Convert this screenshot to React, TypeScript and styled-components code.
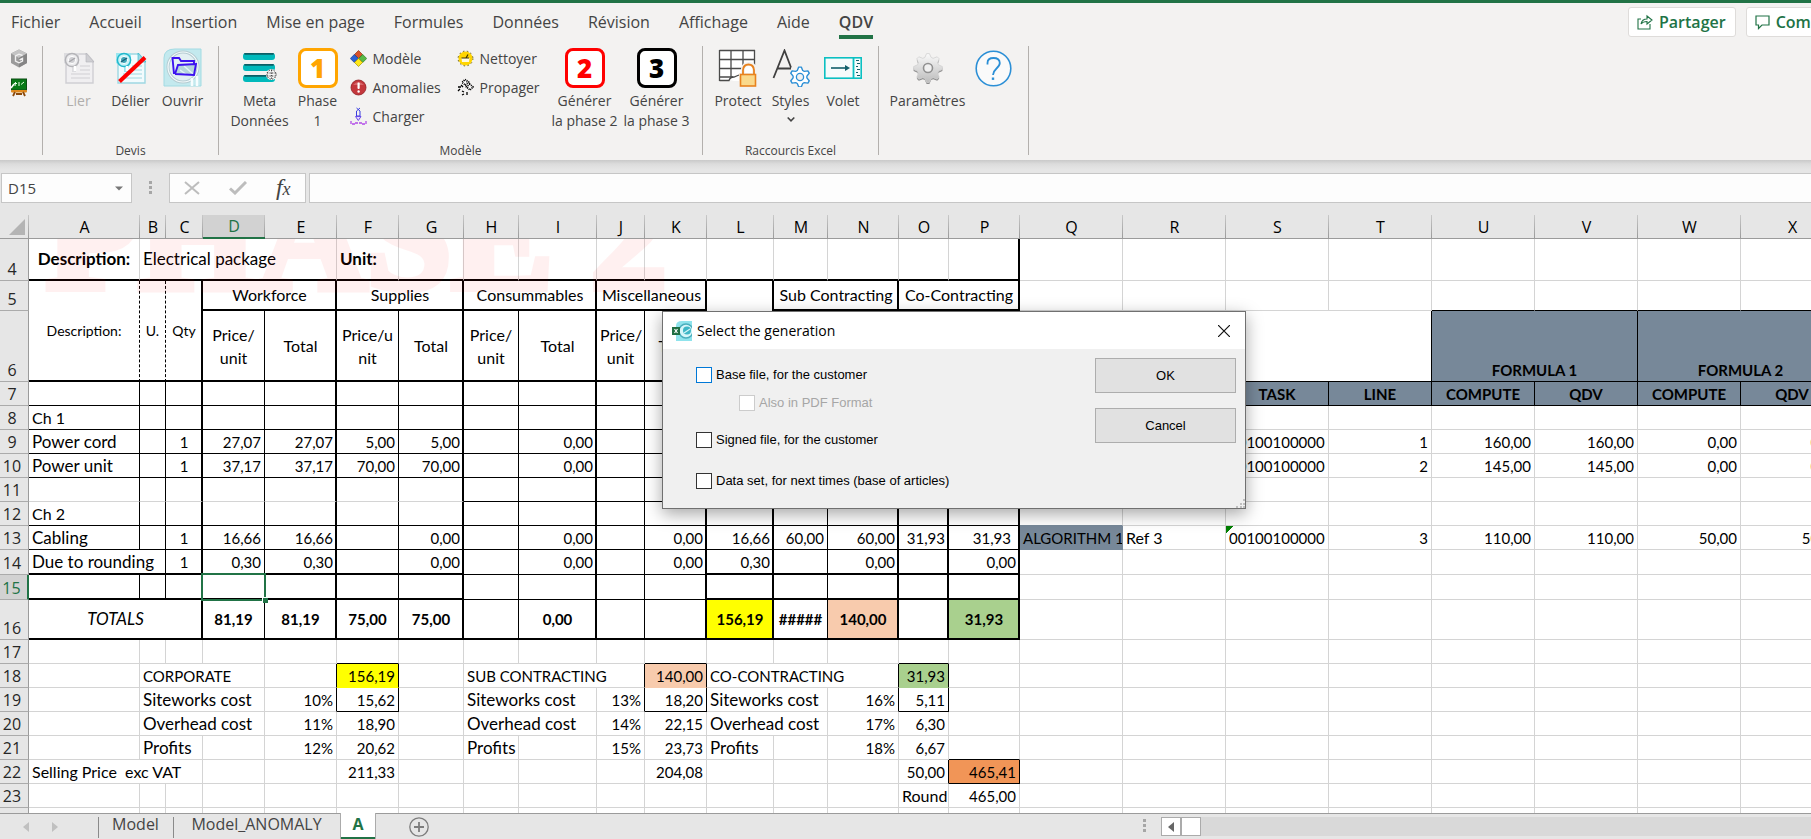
import React from "react";
import styled, { createGlobalStyle, css } from "styled-components";

const ui = `"Open Sans", "Noto Sans", sans-serif`;
const sheetFont = `Lato, "Open Sans", sans-serif`;
const green = "#217346";

const Global = createGlobalStyle`
  *, *::before, *::after { box-sizing: border-box; }
  body { margin: 0; background: #e6e6e6; font-family: ${ui}; color: #444; }
  button, input { font-family: inherit; font-size: inherit; color: inherit; margin: 0; }
  button { background: none; border: 0; padding: 0; cursor: pointer; }
  svg { display: block; flex: none; }
`;

/* ---------- Shell ---------- */

const Shell = styled.div`
  display: flex;
  flex-direction: column;
  height: 100vh;
  overflow: hidden;
  border-top: 3px solid ${green};
  position: relative;
`;

const RibbonArea = styled.header`
  background: #f3f2f1;
  flex: none;
`;

const TabRow = styled.div`
  display: flex;
  height: 40px;
`;

const Tabs = styled.nav`
  display: flex;
  flex: 1;
  align-items: flex-start;
  gap: 29px;
  padding-left: 11px;
`;

const TabButton = styled.button<{ $active?: boolean }>`
  height: 36px;
  padding-top: 6px;
  font-size: 16px;
  line-height: 26px;
  white-space: nowrap;
  border-bottom: 4px solid ${(p) => (p.$active ? green : "transparent")};
  font-weight: ${(p) => (p.$active ? 600 : 400)};
`;

const ShareGroup = styled.div`
  flex: 0 0 183px;
  display: flex;
  gap: 10px;
  padding-top: 4px;
  overflow: hidden;
`;

const ShareButton = styled.button`
  flex: none;
  display: flex;
  align-items: center;
  gap: 6px;
  height: 30px;
  padding: 0 9px 0 8px;
  background: #fff;
  border: 1px solid #dedcda;
  border-radius: 3px;
  color: ${green};
  font-size: 16px;
  font-weight: 600;
`;

const RibbonBody = styled.div`
  display: flex;
  height: 117px;
  padding-top: 3px;
`;

const Group = styled.section<{ $w: number }>`
  flex: none;
  width: ${(p) => p.$w}px;
  display: flex;
  flex-direction: column;
  justify-content: space-between;
`;

const GroupRow = styled.div`
  display: flex;
  justify-content: center;
`;

const GroupLabel = styled.div`
  text-align: center;
  font-size: 12px;
  line-height: 18px;
`;

const Separator = styled.div`
  flex: none;
  width: 1px;
  height: 109px;
  background: #b3b0ad;
`;

const BigButton = styled.button<{ $w: number; $off?: boolean }>`
  width: ${(p) => p.$w}px;
  display: flex;
  flex-direction: column;
  align-items: center;
  padding-top: 2px;
  font-size: 14px;
  line-height: 20px;
  white-space: nowrap;
  color: ${(p) => (p.$off ? "#b0aeac" : "#444")};
`;

const IconSlot = styled.span`
  display: flex;
  align-items: center;
  justify-content: center;
  height: 40px;
  margin-bottom: 3px;
`;

const PhaseBadge = styled.span<{ $c: string }>`
  width: 40px;
  height: 40px;
  border: 3px solid ${(p) => p.$c};
  border-radius: 8px;
  background: #fff;
  color: ${(p) => p.$c};
  font-weight: 800;
  font-size: 26px;
  line-height: 34px;
  text-align: center;
`;

const SmallColumn = styled.div<{ $w: number }>`
  width: ${(p) => p.$w}px;
  display: flex;
  flex-direction: column;
  gap: 5px;
  padding-left: 5px;
`;

const SmallButton = styled.button`
  display: flex;
  align-items: center;
  gap: 6px;
  height: 24px;
  font-size: 14px;
  white-space: nowrap;
`;

const MiniColumn = styled.div`
  width: 42px;
  flex: none;
  display: flex;
  flex-direction: column;
  align-items: flex-start;
  gap: 10px;
  padding: 3px 0 0 10px;
`;

/* ---------- Formula bar ---------- */

const FormulaBar = styled.div`
  flex: none;
  display: flex;
  padding: 13px 0 12px 1px;
  background: linear-gradient(#c9c9c9, #dcdcdc 4px, #e6e6e6 10px);
`;

const Box = styled.div<{ $w: number }>`
  flex: none;
  width: ${(p) => p.$w}px;
  height: 30px;
  display: flex;
  align-items: center;
  justify-content: space-around;
  background: #fdfdfd;
  border: 1px solid #c6c6c6;
`;

const NameInput = styled.input`
  flex: 1;
  min-width: 0;
  border: 0;
  background: none;
  outline: 0;
  padding: 0 6px;
  font-size: 15px;
`;

const CaretButton = styled.button`
  width: 24px;
  display: flex;
  justify-content: center;
`;

const Dots = styled.div<{ $w: number }>`
  flex: none;
  width: ${(p) => p.$w}px;
  display: flex;
  align-items: center;
  justify-content: center;
`;

const FormulaInput = styled.input`
  flex: 1;
  min-width: 0;
  height: 30px;
  margin-left: 3px;
  background: #fdfdfd;
  border: 1px solid #c6c6c6;
  border-right: 0;
  outline: 0;
  padding: 0 6px;
`;

const IconButton = styled.button`
  display: flex;
  align-items: center;
  justify-content: center;
`;

/* ---------- Sheet ---------- */

const SheetArea = styled.main`
  flex: 1;
  min-height: 0;
  overflow: hidden;
  position: relative;
  background: #fff;
`;

const Grid = styled.table`
  border-collapse: separate;
  border-spacing: 0;
  table-layout: fixed;
  font-family: ${sheetFont};
  font-size: 15px;
  line-height: 20px;
  color: #000;
`;

const ColHead = styled.th<{ $sel?: boolean }>`
  height: 24px;
  padding: 0;
  font-family: ${ui};
  font-size: 16px;
  font-weight: 400;
  background: linear-gradient(#c8c8c8, #9b9b9b) right / 1px 100% no-repeat ${(p) => (p.$sel ? "#d2d2d2" : "#e6e6e6")};
  border-bottom: ${(p) => (p.$sel ? `2px solid ${green}` : "1px solid #9b9b9b")};
  color: ${(p) => (p.$sel ? green : "#000")};
  svg { margin-left: 9px; }
`;

const RowHead = styled.th<{ $sel?: boolean }>`
  padding: 0 4px 1px 0;
  vertical-align: bottom;
  font-family: ${ui};
  font-size: 16px;
  font-weight: 400;
  background: ${(p) => (p.$sel ? "#d2d2d2" : "#e6e6e6")};
  border-bottom: 1px solid #ababab;
  border-right: ${(p) => (p.$sel ? `2px solid ${green}` : "1px solid #9b9b9b")};
  color: ${(p) => (p.$sel ? green : "#262626")};
`;

type Line = "grid" | "thin" | "thick" | "dash" | "slate" | "yellow" | "peach" | "leaf";

const slate = "#778899";
const fills = { slate, yellow: "#ffff00", peach: "#f8cbad", leaf: "#a9d08e", orange: "#f19557" };

const lines: Record<Line, string> = {
  grid: "1px solid #d4d4d4",
  thin: "1px solid #000",
  thick: "2px solid #000",
  dash: "1px dashed #000",
  slate: `1px solid ${slate}`,
  yellow: `1px solid ${fills.yellow}`,
  peach: `1px solid ${fills.peach}`,
  leaf: `1px solid ${fills.leaf}`,
};

type Align = "left" | "right" | "center";
type Size = "label" | "number" | "word" | "title";

const sizes: Record<Size, number> = { label: 14, number: 15, word: 16, title: 17 };

const Td = styled.td<{
  $r: Line;
  $b: Line;
  $align: Align;
  $size: Size;
  $fill?: string;
  $bold?: boolean;
  $italic?: boolean;
  $low?: boolean;
  $indent?: boolean;
  $sel?: boolean;
  $flag?: boolean;
}>`
  padding: 0 ${(p) => (p.$indent ? 7 : p.$r === "thick" || p.$align === "left" ? 2 : 3)}px ${(p) => (p.$low ? 1 : 0)}px 3px;
  border-right: ${(p) => lines[p.$r]};
  border-bottom: ${(p) => lines[p.$b]};
  text-align: ${(p) => p.$align};
  background: ${(p) => p.$fill ?? "#fff"};
  white-space: pre;
  overflow: ${(p) => (p.$sel ? "visible" : "hidden")};
  vertical-align: ${(p) => (p.$low ? "bottom" : "middle")};
  font-size: ${(p) => sizes[p.$size]}px;
  font-weight: ${(p) => (p.$bold ? 700 : 400)};
  font-style: ${(p) => (p.$italic ? "italic" : "normal")};
  ${(p) =>
    p.$flag &&
    css`
      background: linear-gradient(135deg, #008000 5px, #fff 5px);
    `}
  ${(p) =>
    p.$sel &&
    css`
      position: relative;
      &::before {
        content: "";
        position: absolute;
        z-index: 1;
        inset: -2px -2px -3px -2px;
        border: 2px solid ${green};
      }
      &::after {
        content: "";
        position: absolute;
        z-index: 2;
        right: -4px;
        bottom: -5px;
        width: 6px;
        height: 6px;
        background: ${green};
        border: solid #fff;
        border-width: 1px 0 0 1px;
      }
    `}
`;

const TwoLine = styled.div`
  line-height: 23px;
`;

const Watermark = styled.div`
  position: absolute;
  top: 24px;
  left: 0;
  height: 56px;
  padding-left: 46px;
  overflow: hidden;
  display: flex;
  align-items: flex-end;
  font-family: "Liberation Serif", serif;
  font-weight: 700;
  font-size: 152px;
  line-height: 116px;
  white-space: pre;
  color: #f00;
  -webkit-text-stroke: 8px #f00;
  opacity: 0.055;
  pointer-events: none;
`;

const cols: [string, number][] = [
  ["A", 111], ["B", 26], ["C", 37], ["D", 62], ["E", 72], ["F", 62], ["G", 65], ["H", 55],
  ["I", 78], ["J", 48], ["K", 62], ["L", 67], ["M", 54], ["N", 71], ["O", 50], ["P", 71],
  ["Q", 103], ["R", 103], ["S", 103], ["T", 103], ["U", 103], ["V", 103], ["W", 103], ["X", 103],
];
const HEAD_W = 29;
const tableWidth = cols.reduce((s, c) => s + c[1], HEAD_W);

const rowHeights: Record<number, number> = { 4: 42, 5: 30, 6: 71, 14: 25, 15: 25, 16: 40 };
const rows = Array.from({ length: 21 }, (_, i) => i + 4);

interface CellData {
  t?: React.ReactNode;
  cs?: number;
  rs?: number;
  al?: Align;
  size?: Size;
  fill?: string;
  bold?: boolean;
  italic?: boolean;
  low?: boolean;
  indent?: boolean;
  flag?: boolean;
}

const L = (t: string, cs = 1, size: Size = "title"): CellData => ({ t, cs, size });
const R = (t: string, extra: CellData = {}): CellData => ({ t, al: "right", ...extra });
const C = (t: React.ReactNode, extra: CellData = {}): CellData => ({ t, al: "center", ...extra });
const W = (t: React.ReactNode, cs = 1): CellData => ({ t, cs, al: "center", size: "word" });
const H = (t: string, cs = 1): CellData => ({ t, cs, al: "center", bold: true, fill: slate, low: true });
const B = (t: string, extra: CellData = {}): CellData => ({ t, al: "center", bold: true, ...extra });
const price = W(<TwoLine>{"Price/\nunit"}</TwoLine>);

const cells: Record<string, CellData> = {
  A4: B("Description:", { size: "title" }), B4: L("Electrical package", 4), F4: { t: "Unit:", bold: true, size: "title" },
  A5: C("Description:", { rs: 2, size: "label" }), B5: C("U.", { rs: 2, size: "label" }), C5: C("Qty", { rs: 2, size: "label" }),
  D5: W("Workforce", 2), F5: W("Supplies", 2), H5: W("Consummables", 2),
  J5: W("Miscellaneous", 2), L5: { rs: 2 }, M5: W("Sub Contracting", 2), O5: W("Co-Contracting", 2),
  D6: price, E6: W("Total"), F6: W(<TwoLine>{"Price/u\nnit"}</TwoLine>), G6: W("Total"),
  H6: price, I6: W("Total"), J6: price, K6: W("Total"),
  Q6: { cs: 4 }, U6: H("FORMULA 1", 2), W6: H("FORMULA 2", 2),
  Q7: H(""), R7: H(""), S7: H("TASK"), T7: H("LINE"), U7: H("COMPUTE"), V7: H("QDV"), W7: H("COMPUTE"), X7: H("QDV"),
  A8: L("Ch 1", 1, "word"),
  A9: L("Power cord"), C9: C("1"), D9: R("27,07"), E9: R("27,07"), F9: R("5,00"), G9: R("5,00"), I9: R("0,00"),
  S9: L("00100100000", 1, "number"), T9: R("1"), U9: R("160,00"), V9: R("160,00"), W9: R("0,00"), X9: R("0,00"),
  A10: L("Power unit"), C10: C("1"), D10: R("37,17"), E10: R("37,17"), F10: R("70,00"), G10: R("70,00"), I10: R("0,00"),
  S10: L("00100100000", 1, "number"), T10: R("2"), U10: R("145,00"), V10: R("145,00"), W10: R("0,00"), X10: R("0,00"),
  A12: L("Ch 2", 1, "word"),
  A13: L("Cabling"), C13: C("1"), D13: R("16,66"), E13: R("16,66"), G13: R("0,00"), I13: R("0,00"), K13: R("0,00"),
  L13: R("16,66"), M13: R("60,00"), N13: R("60,00"), O13: R("31,93"), P13: R("31,93", { indent: true }),
  Q13: { t: "ALGORITHM 1", fill: slate }, R13: L("Ref 3", 1, "word"), S13: { t: "00100100000", flag: true },
  T13: R("3"), U13: R("110,00"), V13: R("110,00"), W13: R("50,00"), X13: R("50,00"),
  A14: L("Due to rounding", 2), C14: C("1"), D14: R("0,30"), E14: R("0,30"), G14: R("0,00"), I14: R("0,00"),
  K14: R("0,00"), L14: R("0,30"), N14: R("0,00"), P14: R("0,00"),
  A16: C("TOTALS", { cs: 3, italic: true, size: "title" }), D16: B("81,19"), E16: B("81,19"), F16: B("75,00"), G16: B("75,00"),
  I16: B("0,00"), L16: B("156,19", { fill: fills.yellow }), M16: B("#####"),
  N16: B("140,00", { fill: fills.peach }), P16: B("31,93", { fill: fills.leaf }),
  B18: L("CORPORATE", 3, "number"), F18: R("156,19", { fill: fills.yellow }),
  H18: L("SUB CONTRACTING", 3, "number"), K18: R("140,00", { fill: fills.peach }),
  L18: L("CO-CONTRACTING", 3, "number"), O18: R("31,93", { fill: fills.leaf }),
  B19: L("Siteworks cost", 3), E19: R("10%"), F19: R("15,62"), H19: L("Siteworks cost", 2), J19: R("13%"), K19: R("18,20"),
  L19: L("Siteworks cost", 2), N19: R("16%"), O19: R("5,11"),
  B20: L("Overhead cost", 3), E20: R("11%"), F20: R("18,90"), H20: L("Overhead cost", 2), J20: R("14%"), K20: R("22,15"),
  L20: L("Overhead cost", 2), N20: R("17%"), O20: R("6,30"),
  B21: L("Profits", 2), E21: R("12%"), F21: R("20,62"), H21: L("Profits"), J21: R("15%"), K21: R("23,73"),
  L21: L("Profits"), N21: R("18%"), O21: R("6,67"),
  A22: L("Selling Price  exc VAT", 3, "word"), F22: R("211,33"), K22: R("204,08"), O22: R("50,00"),
  P22: R("465,41", { fill: fills.orange }),
  O23: L("Round", 1, "word"), P23: R("465,00"),
};

function rightLine(col: string, row: number): Line {
  if (col === "P" && row <= 16) return "thick";
  if (row >= 5 && row <= 16 && col < "P") {
    if ("CEGIKLN".includes(col)) return row === 15 && col === "C" ? "thin" : "thick";
    if (col === "O") return row >= 12 ? "thick" : "thin";
    if (row <= 6 && (col === "A" || col === "B")) return "dash";
    return "thin";
  }
  if (row === 6 || row === 7) return "thin";
  if (row === 13 && col === "Q") return "slate";
  if ((row === 18 || row === 19) && "EFJKNO".includes(col)) return "thin";
  if (row === 22 && (col === "O" || col === "P")) return "thin";
  return "grid";
}

function bottomLine(col: string, row: number): Line {
  if (col <= "P") {
    if (row === 4 || row === 6 || row === 16) return "thick";
    if (row === 5) return "thick";
    if (row === 11) return col < "H" ? "grid" : "thin";
    if (row >= 7 && row <= 13) return "thin";
    if (row === 14 || row === 15) return col >= "H" && col <= "K" ? "thin" : "thick";
    if ((row === 17 || row === 19) && "FKO".includes(col)) return "thin";
    if (row === 18 && col === "F") return "yellow";
    if (row === 18 && col === "K") return "peach";
    if (row === 18 && col === "O") return "leaf";
    if ((row === 21 || row === 22) && col === "P") return "thin";
    return "grid";
  }
  if (row === 5 && col >= "U") return "thin";
  if (row === 6 || row === 7) return "thin";
  if ((row === 12 || row === 13) && col === "Q") return "slate";
  return "grid";
}

function Sheet() {
  const covered = new Set<string>();
  return (
    <Grid style={{ width: tableWidth }}>
      <colgroup>
        <col width={HEAD_W} />
        {cols.map(([c, w]) => (
          <col key={c} width={w} />
        ))}
      </colgroup>
      <thead>
        <tr>
          <ColHead aria-label="Tout">
            <svg width="16" height="16" viewBox="0 0 16 16"><path d="M16 0V16H0Z" fill="#b4b4b4" /></svg>
          </ColHead>
          {cols.map(([c]) => (
            <ColHead key={c} scope="col" $sel={c === "D"}>{c}</ColHead>
          ))}
        </tr>
      </thead>
      <tbody>
        {rows.map((row) => (
          <tr key={row} style={{ height: rowHeights[row] ?? 24 }}>
            <RowHead scope="row" $sel={row === 15}>{row < 24 ? row : null}</RowHead>
            {cols.map(([col], i) => {
              const key = `${col}${row}`;
              if (covered.has(key)) return null;
              const d = cells[key] ?? {};
              const cs = d.cs ?? 1;
              const rs = d.rs ?? 1;
              for (let x = 0; x < cs; x++)
                for (let y = 0; y < rs; y++) covered.add(`${cols[i + x][0]}${row + y}`);
              return (
                <Td
                  key={key}
                  colSpan={cs}
                  rowSpan={rs}
                  $r={rightLine(cols[i + cs - 1][0], row)}
                  $b={bottomLine(col, row + rs - 1)}
                  $align={d.al ?? "left"}
                  $size={d.size ?? "number"}
                  $fill={d.fill}
                  $bold={d.bold}
                  $italic={d.italic}
                  $low={d.low}
                  $indent={d.indent}
                  $flag={d.flag}
                  $sel={key === "D15"}
                >
                  {d.t}
                </Td>
              );
            })}
          </tr>
        ))}
      </tbody>
    </Grid>
  );
}

/* ---------- Bottom bar ---------- */

const BottomBar = styled.footer`
  flex: none;
  display: flex;
  height: 26px;
  background: #e6e6e6;
  box-shadow: inset 0 1px #9b9b9b;
`;

const NavArrows = styled.div`
  flex: none;
  width: 98px;
  display: flex;
  align-items: center;
  gap: 23px;
  padding: 2px 0 0 23px;
`;

const SheetTab = styled.button<{ $w: number; $active?: boolean }>`
  flex: none;
  width: ${(p) => p.$w}px;
  padding-bottom: 4px;
  font-size: 16px;
  line-height: 20px;
  color: ${(p) => (p.$active ? green : "#444")};
  font-weight: ${(p) => (p.$active ? 700 : 400)};
  ${(p) =>
    p.$active
      ? css`
          background: #fff;
          box-shadow: inset 1px 0 #ababab, inset -1px 0 #ababab, inset 0 -2px ${green};
        `
      : css`
          background: linear-gradient(#8a8a8a, #8a8a8a) left 4px / 1px 21px no-repeat;
        `}
`;

const AddButton = styled.button`
  width: 86px;
  display: flex;
  justify-content: center;
  padding-top: 4px;
`;

const Spacer = styled.div`
  flex: 1;
`;

const ScrollTrack = styled.div`
  flex: 0 0 650px;
  height: 19px;
  margin-top: 4px;
  display: flex;
  background: #d9d9d9;
`;

const ScrollPart = styled.button<{ $w: number }>`
  width: ${(p) => p.$w}px;
  display: flex;
  align-items: center;
  justify-content: center;
  background: #fff;
  border: 1px solid #ababab;
`;

/* ---------- Dialog ---------- */

const Dialog = styled.div`
  position: absolute;
  left: 662px;
  top: 308px;
  z-index: 5;
  width: 584px;
  border: 1px solid #707070;
  background: #f0f0f0;
  box-shadow: 0 5px 16px rgba(0, 0, 0, 0.35);
  color: #000;
`;

const DialogTitle = styled.div`
  display: flex;
  align-items: center;
  gap: 5px;
  height: 37px;
  padding: 0 15px 0 9px;
  background: #fff;
  font-size: 14px;
`;

const DialogHeading = styled.h2`
  flex: 1;
  margin: 0;
  font-size: 14px;
  font-weight: 400;
`;

const DialogBody = styled.div`
  display: flex;
  justify-content: space-between;
  padding: 9px 9px 19px 33px;
  font-family: "Liberation Sans", Arial, sans-serif;
  font-size: 13px;
  position: relative;
`;

const Options = styled.div`
  display: flex;
  flex-direction: column;
  padding-top: 9px;
`;

const Option = styled.label<{ $gap?: number; $nested?: boolean; $off?: boolean }>`
  display: flex;
  align-items: flex-start;
  gap: 4px;
  height: 16px;
  line-height: 15px;
  margin-top: ${(p) => p.$gap ?? 0}px;
  margin-left: ${(p) => (p.$nested ? 43 : 0)}px;
  color: ${(p) => (p.$off ? "#a6a6a6" : "#000")};
`;

const Check = styled.input<{ $c: string }>`
  appearance: none;
  width: 16px;
  height: 16px;
  border: 1px solid ${(p) => p.$c};
  background: #fff;
`;

const DialogButtons = styled.div`
  display: flex;
  flex-direction: column;
  gap: 15px;
`;

const DialogButton = styled.button`
  width: 141px;
  height: 35px;
  background: #e1e1e1;
  border: 1px solid #adadad;
`;

const Grip = styled.span`
  position: absolute;
  right: 0;
  bottom: 0;
`;

/* ---------- Icons ---------- */

const DocIcon = ({ cyan }: { cyan?: boolean }) => {
  const a = cyan ? "#22b8cc" : "#b4b4b8";
  const l = cyan ? "#9fd8e2" : "#cfcfd3";
  return (
    <svg width="32" height="34" viewBox="0 0 32 34">
      <path d="M3 3H24L30 10V32H3Z" fill={cyan ? "#f2fbfd" : "#f0eff1"} stroke={l} strokeWidth="1.4" />
      <path d="M23 2L31 11H23Z" fill={l} stroke={a} strokeWidth="0.6" />
      <path d="M17 15H27M17 19H27M8 23H27M8 27H27" stroke={l} strokeWidth="1.2" />
      <path d="M1 2H16V12L13 17V21H9V16L1 12Z" fill={cyan ? "#9be6ef" : "#dcdcdf"} />
      <circle cx="9" cy="9" r="6.600" fill={cyan ? "#c8f4f8" : "#ececee"} stroke={a} strokeWidth="1.500" />
      <circle cx="9" cy="9" r="3.600" fill={cyan ? "#3fa7b8" : "#cfcfd3"} stroke="#fff" strokeWidth="1" />
      <path d="M6 11L12 7" stroke={cyan ? "#1c5f78" : "#a6a6aa"} strokeWidth="1.400" />
      <path d="M12 15V20" stroke="#fff" strokeWidth="2.500" />
      {cyan && <path d="M4.500 30.500L30 6.500" stroke="#f00" strokeWidth="4" />}
    </svg>
  );
};

const OpenIcon = () => (
  <svg width="40" height="40" viewBox="0 0 40 40">
    <path d="M1 38V10Q1 1 12 1H38V38Z" fill="#c3e9ee" stroke="#a2dbe3" />
    <circle cx="20" cy="19" r="15" fill="#e3f0f3" stroke="#b4cbd1" strokeWidth="3" />
    <circle cx="20" cy="19" r="15" fill="none" stroke="#f3fbfc" strokeWidth="1.200" />
    <path d="M29 30V38M34 28V38" stroke="#f7fdfe" strokeWidth="2.500" />
    <path d="M12 26L15 17H33L30 27Z" fill="#b5d5dc" />
    <path d="M17 22L24 27M21 18L30 26" stroke="#e4f5f8" strokeWidth="1.500" />
    <path d="M11 26L9.500 10H16L18 13H31V16M12 26L15 17L33 16L31 27L12 26" fill="none" stroke="#3d12f0" strokeWidth="1.900" />
  </svg>
);

const MetaIcon = () => (
  <svg width="34" height="32" viewBox="0 0 34 32">
    {[1, 12, 23].map((y) => (
      <g key={y}>
        <rect x="0" y={y} width="32" height="7" rx="3" fill="#00b9bb" />
        <path d={`M2 ${y + 0.8}H30`} stroke="#0b5f66" strokeWidth="1.8" strokeLinecap="round" />
      </g>
    ))}
    <circle cx="28.500" cy="22.500" r="5.500" fill="#f4f4f4" />
    <circle cx="28.500" cy="22.500" r="4.600" fill="none" stroke="#222" strokeWidth="1" strokeDasharray="1.2 1.4" />
    <path d="M28.500 18V27M24 21H33M24 24H33" stroke="#333" strokeWidth="0.900" strokeDasharray="1.3 1.2" />
  </svg>
);

const CubeIcon = () => (
  <svg width="18" height="19" viewBox="0 0 18 19">
    <path d="M9 0.500L17 4.500V14L9 18.500L1 14V4.500Z" fill="#9b9b9b" />
    <path d="M9 0.500L17 4.500L9 9L1 4.500Z" fill="#c4c4c4" />
    <path d="M9 9L17 4.500V14L9 18.500Z" fill="#858585" />
    <path d="M12.500 6.500L9 5.200L5.500 7V12L9 13.800L12.500 12V9.500L9.500 11" fill="none" stroke="#f0f0f0" strokeWidth="1.400" />
  </svg>
);

const BoardIcon = () => (
  <svg width="18" height="19" viewBox="0 0 18 19">
    <rect x="1.500" y="1" width="15" height="11" fill="#077a16" stroke="#0b4d12" />
    <path d="M4 5.500H7M5.500 4L5 8M9 4V8M11 6.500L14 4" stroke="#e8ffe8" strokeWidth="1" />
    <path d="M1 10L4 6" stroke="#fff" strokeWidth="1.500" />
    <rect x="1" y="12" width="16" height="2.500" rx="1" fill="#e08a1e" />
    <path d="M5 14L3 18M13 14L15 18M6 16H12" stroke="#8b4a0c" strokeWidth="1.800" />
  </svg>
);

const DiamondsIcon = () => (
  <svg width="17" height="17" viewBox="0 0 17 17">
    <path d="M8.500 0.500L12.500 4.500L8.500 8.500L4.500 4.500Z" fill="#d9542b" stroke="#8f3013" strokeWidth="0.700" />
    <path d="M4.300 4.500L8.300 8.500L4.300 12.500L0.300 8.500Z" fill="#2c62d6" stroke="#1a3a86" strokeWidth="0.700" />
    <path d="M12.700 4.500L16.700 8.500L12.700 12.500L8.700 8.500Z" fill="#58b947" stroke="#2b7a1e" strokeWidth="0.700" />
    <path d="M8.500 8.500L12.500 12.500L8.500 16.500L4.500 12.500Z" fill="#ffe81a" stroke="#a89200" strokeWidth="0.700" />
  </svg>
);

const ErrorIcon = () => (
  <svg width="17" height="17" viewBox="0 0 17 17">
    <circle cx="8.500" cy="8.500" r="7.500" fill="#c4373c" stroke="#8f1d22" strokeWidth="0.800" />
    <path d="M3 6Q8.500 0 14 6" fill="#de7a7c" opacity="0.700" />
    <rect x="7.500" y="3.500" width="2.200" height="6.500" rx="1" fill="#fff" />
    <circle cx="8.600" cy="12.500" r="1.200" fill="#fff" />
  </svg>
);

const LoadIcon = () => (
  <svg width="17" height="19" viewBox="0 0 17 19">
    <path d="M6.500 1L10 4M10 1L6.500 4V9H10V4" fill="none" stroke="#3a3fe0" strokeWidth="1" />
    <path d="M5.500 9.500H11L8.300 13.500Z" fill="#e6dcff" stroke="#6b4be8" strokeWidth="1" />
    <path d="M1 14V17H5V16H12V17H16V14" fill="none" stroke="#b14be8" strokeWidth="1.300" strokeDasharray="3 1" />
  </svg>
);

const CleanIcon = () => (
  <svg width="17" height="17" viewBox="0 0 17 17">
    <circle cx="8.500" cy="8.500" r="7" fill="#ffd500" />
    <circle cx="8.500" cy="8.500" r="7.400" fill="none" stroke="#6b5a00" strokeWidth="1" strokeDasharray="1.500 2.500" />
    <path d="M4.500 8H12.500L12 12H5Z" fill="#fffbe0" />
    <path d="M4.500 8H12M9 8L11 4.500" stroke="#3d3300" strokeWidth="1.200" />
  </svg>
);

const SpreadIcon = () => (
  <svg width="17" height="18" viewBox="0 0 17 18">
    <g fill="#fff" stroke="#000" strokeWidth="1.800" strokeDasharray="1 0.900">
      <path d="M8 1.500L11.500 4L8.500 7L5 4.500Z" />
      <path d="M12.500 6L16 9L13 12L9.500 9Z" />
    </g>
    <path d="M1 9H4M3 11L1 13M5 13L7 14M7 16L5 17M10 14V17M4 7L6 9" stroke="#000" strokeWidth="1.300" />
  </svg>
);

const ProtectIcon = () => (
  <svg width="40" height="38" viewBox="0 0 40 38">
    <path d="M2 1.500H37V32H16L12 31L8 32H2Z" fill="#fff" />
    <path d="M1.500 1.500H37M1.500 10.500H37M1.500 19.500H24M1.500 28H15M1.500 1V32M13 1V28M25 1V20M36.500 1V16" fill="none" stroke="#4a4a4a" strokeWidth="1.300" />
    <path d="M1.500 31.500H11Q12 28 16 28L21 26" fill="none" stroke="#4a4a4a" strokeWidth="1.300" />
    <rect x="21" y="24" width="18" height="14" fill="#f3f2f1" />
    <path d="M25 26V20Q25.500 15 31 15T36 20V26" fill="none" stroke="#f3f2f1" strokeWidth="4" />
    <path d="M25 26V21Q25.500 15.500 30.500 15.500T36 21V26" fill="none" stroke="#e8821e" strokeWidth="1.800" />
    <rect x="22.500" y="25.500" width="15" height="11.500" fill="#fad98b" stroke="#e8821e" strokeWidth="1.600" />
  </svg>
);

const teeth = (cx: number, cy: number, r1: number, r2: number, n: number) =>
  Array.from({ length: n * 4 }, (_, i) => {
    const a = ((i - 0.5) / (n * 4)) * Math.PI * 2 - Math.PI / 2;
    const r = i % 4 < 2 ? r2 : r1;
    return `${(cx + r * Math.cos(a)).toFixed(1)},${(cy + r * Math.sin(a)).toFixed(1)}`;
  }).join(" ");

const StylesIcon = () => (
  <svg width="38" height="38" viewBox="0 0 38 38">
    <path d="M1.500 29L12.500 1.500L19 18.500M5.500 19.500H19" fill="none" stroke="#404040" strokeWidth="1.800" />
    <polygon points={teeth(28, 28, 7, 10, 6)} fill="#fff" stroke="#2b8fd6" strokeWidth="1.400" strokeLinejoin="round" />
    <circle cx="28" cy="28" r="3.600" fill="#f3f2f1" stroke="#2b8fd6" strokeWidth="1.300" />
  </svg>
);

const PaneIcon = () => (
  <svg width="38" height="22" viewBox="0 0 38 22">
    <rect x="0.800" y="0.800" width="36.400" height="20.400" fill="#f6fbfb" stroke="#0bc0c2" strokeWidth="1.600" />
    <path d="M29.500 1V21" stroke="#0bc0c2" strokeWidth="1.800" />
    <path d="M7 11H24" stroke="#12606b" strokeWidth="1.600" />
    <path d="M21 8L26 11L21 14Z" fill="#12606b" />
    <path d="M32 3.500H35M33 6.500H36M32 9.500H34M33 12.500H36M32 15.500H34M33 18.500H36" stroke="#12606b" strokeWidth="1.200" />
  </svg>
);

const GearIcon = () => (
  <svg width="32" height="34" viewBox="0 0 32 34">
    <defs>
      <linearGradient id="metal" x1="0" y1="0" x2="0" y2="1">
        <stop offset="0" stopColor="#fafafa" />
        <stop offset="1" stopColor="#bcbcbc" />
      </linearGradient>
    </defs>
    <polygon points={teeth(16, 18.5, 11, 14.5, 8)} fill="#8d8d8d" strokeLinejoin="round" />
    <polygon points={teeth(16, 17, 11, 14.5, 8)} fill="url(#metal)" stroke="#d0d0d0" strokeWidth="0.800" strokeLinejoin="round" />
    <circle cx="16" cy="17" r="4.500" fill="#f0f0f0" stroke="#909090" strokeWidth="1.600" />
  </svg>
);

const HelpIcon = () => (
  <svg width="37" height="37" viewBox="0 0 37 37">
    <circle cx="18.500" cy="18.500" r="17.300" fill="#fafafa" stroke="#2b8fd6" strokeWidth="1.600" />
    <path d="M12.500 14.500V13Q12.500 8 18.500 8T24.800 13Q24.800 15.500 21.500 18.500T18 25" fill="none" stroke="#2b8fd6" strokeWidth="1.800" />
    <rect x="16.800" y="27.500" width="2.400" height="2.400" fill="#2b8fd6" />
  </svg>
);

const DotsIcon = () => (
  <svg width="3" height="14" viewBox="0 0 3 14" fill="#a6a6a6">
    <rect width="3" height="3" /><rect y="5" width="3" height="3" /><rect y="10" width="3" height="3" />
  </svg>
);

const Fx = styled.span`
  font: italic 400 24px/24px "Liberation Serif", serif;
  color: #444;
  small { font-size: 18px; }
`;

const menu = ["Fichier", "Accueil", "Insertion", "Mise en page", "Formules", "Données", "Révision", "Affichage", "Aide", "QDV"];

interface BigProps {
  icon: React.ReactNode;
  label?: string[];
  w: number;
  off?: boolean;
  name?: string;
  children?: React.ReactNode;
}

const Big = ({ icon, label = [], w, off, name, children }: BigProps) => (
  <BigButton $w={w} $off={off} disabled={off} aria-label={name}>
    <IconSlot>{icon}</IconSlot>
    {label.map((l) => (
      <span key={l}>{l}</span>
    ))}
    {children}
  </BigButton>
);

export default function App() {
  return (
    <Shell>
      <Global />
      <RibbonArea>
        <TabRow>
          <Tabs>
            {menu.map((m) => (
              <TabButton key={m} $active={m === "QDV"}>{m}</TabButton>
            ))}
          </Tabs>
          <ShareGroup>
            <ShareButton>
              <svg width="16" height="16" viewBox="0 0 16 16" fill="none" stroke={green} strokeWidth="1.1">
                <path d="M4 5H1V15H13V10" />
                <path d="M4 10Q5 5 10 5V2L15 6L10 10V7.500Q6 7.500 4 10Z" />
              </svg>
              Partager
            </ShareButton>
            <ShareButton>
              <svg width="15" height="15" viewBox="0 0 15 15" fill="none" stroke={green} strokeWidth="1.2">
                <path d="M1 1H14V10H7L3.500 13.500V10H1Z" />
              </svg>
              Commentaires
            </ShareButton>
          </ShareGroup>
        </TabRow>
        <RibbonBody>
          <MiniColumn>
            <IconButton aria-label="Cube"><CubeIcon /></IconButton>
            <IconButton aria-label="Tableau"><BoardIcon /></IconButton>
          </MiniColumn>
          <Separator />
          <Group $w={175}>
            <GroupRow>
              <Big w={52} off icon={<DocIcon />} label={["Lier"]} />
              <Big w={52} icon={<DocIcon cyan />} label={["Délier"]} />
              <Big w={52} icon={<OpenIcon />} label={["Ouvrir"]} />
            </GroupRow>
            <GroupLabel>Devis</GroupLabel>
          </Group>
          <Separator />
          <Group $w={483}>
            <GroupRow>
              <Big w={62} icon={<MetaIcon />} label={["Meta", "Données"]} />
              <Big w={54} icon={<PhaseBadge $c="#ffa500">1</PhaseBadge>} label={["Phase", "1"]} />
              <SmallColumn $w={107}>
                <SmallButton><DiamondsIcon />Modèle</SmallButton>
                <SmallButton><ErrorIcon />Anomalies</SmallButton>
                <SmallButton><LoadIcon />Charger</SmallButton>
              </SmallColumn>
              <SmallColumn $w={97}>
                <SmallButton><CleanIcon />Nettoyer</SmallButton>
                <SmallButton><SpreadIcon />Propager</SmallButton>
              </SmallColumn>
              <Big w={72} icon={<PhaseBadge $c="#ff0000">2</PhaseBadge>} label={["Générer", "la phase 2"]} />
              <Big w={72} icon={<PhaseBadge $c="#000000">3</PhaseBadge>} label={["Générer", "la phase 3"]} />
            </GroupRow>
            <GroupLabel>Modèle</GroupLabel>
          </Group>
          <Separator />
          <Group $w={175}>
            <GroupRow>
              <Big w={54} icon={<ProtectIcon />} label={["Protect"]} />
              <Big w={51} icon={<StylesIcon />} label={["Styles"]}>
                <svg width="8" height="16" viewBox="0 0 8 16" fill="none" stroke="#444" strokeWidth="1.600">
                  <path d="M0.700 6.500L4 9.800L7.300 6.500" />
                </svg>
              </Big>
              <Big w={54} icon={<PaneIcon />} label={["Volet"]} />
            </GroupRow>
            <GroupLabel>Raccourcis Excel</GroupLabel>
          </Group>
          <Separator />
          <Group $w={149}>
            <GroupRow>
              <Big w={80} icon={<GearIcon />} label={["Paramètres"]} />
              <Big w={52} icon={<HelpIcon />} name="Aide" />
            </GroupRow>
          </Group>
          <Separator />
        </RibbonBody>
      </RibbonArea>

      <FormulaBar>
        <Box $w={131}>
          <NameInput aria-label="Zone Nom" defaultValue="D15" />
          <CaretButton aria-label="Noms">
            <svg width="8" height="5" viewBox="0 0 8 5"><path d="M0 0.500H8L4 4.500Z" fill="#777" /></svg>
          </CaretButton>
        </Box>
        <Dots $w={37}><DotsIcon /></Dots>
        <Box $w={137}>
          <IconButton aria-label="Annuler">
            <svg width="16" height="14" viewBox="0 0 16 14" fill="none" stroke="#bdbdbd" strokeWidth="2"><path d="M1 1L15 13M15 1L1 13" /></svg>
          </IconButton>
          <IconButton aria-label="Entrer">
            <svg width="18" height="14" viewBox="0 0 18 14" fill="none" stroke="#bdbdbd" strokeWidth="3"><path d="M1 7.500L6 12L17 1" /></svg>
          </IconButton>
          <IconButton aria-label="Insérer une fonction"><Fx>f<small>x</small></Fx></IconButton>
        </Box>
        <FormulaInput aria-label="Formule" />
      </FormulaBar>

      <SheetArea>
        <Sheet />
        <Watermark aria-hidden="true">PHASE 2</Watermark>
      </SheetArea>

      <BottomBar>
        <NavArrows>
          <IconButton aria-label="Feuille précédente">
            <svg width="6" height="10" viewBox="0 0 6 10"><path d="M6 0V10L0 5Z" fill="#c0c0c0" /></svg>
          </IconButton>
          <IconButton aria-label="Feuille suivante">
            <svg width="6" height="10" viewBox="0 0 6 10"><path d="M0 0V10L6 5Z" fill="#c0c0c0" /></svg>
          </IconButton>
        </NavArrows>
        <SheetTab $w={75}>Model</SheetTab>
        <SheetTab $w={167}>Model_ANOMALY</SheetTab>
        <SheetTab $w={36} $active>A</SheetTab>
        <AddButton aria-label="Nouvelle feuille">
          <svg width="20" height="20" viewBox="0 0 20 20" fill="none" stroke="#7d7d7d">
            <circle cx="10" cy="10" r="9.200" strokeWidth="1.300" />
            <path d="M10 5V15M5 10H15" strokeWidth="1.800" />
          </svg>
        </AddButton>
        <Spacer />
        <Dots $w={34}><DotsIcon /></Dots>
        <ScrollTrack>
          <ScrollPart $w={20} aria-label="Défiler à gauche">
            <svg width="6" height="10" viewBox="0 0 6 10"><path d="M6 0V10L0 5Z" fill="#666" /></svg>
          </ScrollPart>
          <ScrollPart $w={20} aria-label="Curseur" />
        </ScrollTrack>
      </BottomBar>

      <Dialog role="dialog" aria-labelledby="dialog-title">
        <DialogTitle>
          <svg width="20" height="20" viewBox="0 0 20 20">
            <path d="M4 20V5Q4 0 10 0H20V20Z" fill="#8fe3ec" />
            <circle cx="14" cy="10" r="7" fill="#d7f6f9" stroke="#4aaebd" strokeWidth="1.500" />
            <circle cx="15" cy="9.500" r="4" fill="#3fb6c6" />
            <path d="M12 12L18 8" stroke="#d7f6f9" strokeWidth="1.200" />
            <rect x="0" y="6" width="8" height="8" fill="#1f6e43" />
            <path d="M2.500 8L5.500 12M5.500 8L2.500 12" stroke="#fff" strokeWidth="1.200" />
          </svg>
          <DialogHeading id="dialog-title">Select the generation</DialogHeading>
          <IconButton aria-label="Fermer">
            <svg width="12" height="12" viewBox="0 0 12 12" fill="none" stroke="#111" strokeWidth="1.200"><path d="M0 0L12 12M12 0L0 12" /></svg>
          </IconButton>
        </DialogTitle>
        <DialogBody>
          <Options>
            <Option><Check type="checkbox" $c="#0078d7" />Base file, for the customer</Option>
            <Option $gap={12} $nested $off><Check type="checkbox" disabled $c="#cccccc" />Also in PDF Format</Option>
            <Option $gap={21}><Check type="checkbox" $c="#333333" />Signed file, for the customer</Option>
            <Option $gap={25}><Check type="checkbox" $c="#333333" />Data set, for next times (base of articles)</Option>
          </Options>
          <DialogButtons>
            <DialogButton>OK</DialogButton>
            <DialogButton>Cancel</DialogButton>
          </DialogButtons>
          <Grip aria-hidden="true">
            <svg width="9" height="9" viewBox="0 0 9 9" fill="#bfbfbf">
              <rect x="7" y="0" width="2" height="2" /><rect x="7" y="4" width="2" height="2" /><rect x="7" y="7" width="2" height="2" />
              <rect x="4" y="4" width="2" height="2" /><rect x="4" y="7" width="2" height="2" /><rect x="0" y="7" width="2" height="2" />
            </svg>
          </Grip>
        </DialogBody>
      </Dialog>
    </Shell>
  );
}
